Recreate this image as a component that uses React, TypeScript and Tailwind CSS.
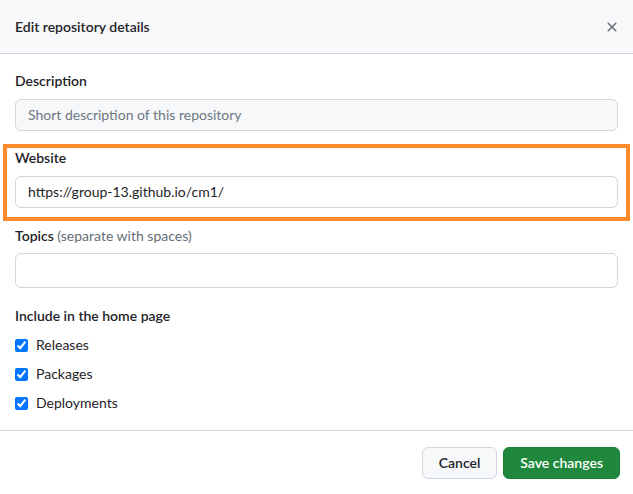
export default function App() {
  const font = { fontFamily: '"Segoe UI", Lato, "Noto Sans", sans-serif' };
  return (
    <div
      className="w-[633px] h-[494px] bg-white text-[#1f2328] text-sm overflow-hidden"
      style={font}
    >
      {/* Header */}
      <div className="h-[54px] bg-[#f6f8fa] border-b border-[#d0d7de] flex items-center justify-between pl-[15px] pr-[13px]">
        <h1 className="text-sm font-semibold">Edit repository details</h1>
        <svg width="16" height="16" viewBox="0 0 16 16" className="fill-[#656d76]">
          <path d="M3.72 3.72a.75.75 0 0 1 1.06 0L8 6.94l3.22-3.22a.749.749 0 0 1 1.275.326.749.749 0 0 1-.215.734L9.06 8l3.22 3.22a.749.749 0 0 1-.326 1.275.749.749 0 0 1-.734-.215L8 9.06l-3.22 3.22a.751.751 0 0 1-1.042-.018.751.751 0 0 1-.018-1.042L6.94 8 3.72 4.78a.75.75 0 0 1 0-1.06Z" />
        </svg>
      </div>

      {/* Body */}
      <div className="px-[15px] pt-[17px] pb-[17px] border-b border-[#d0d7de]">
        <label className="block font-semibold leading-5 mb-2">Description</label>
        <div className="h-8 rounded-md border border-[#d0d7de] bg-[#f6f8fa] flex items-center px-3 text-[#6e7781]">
          Short description of this repository
        </div>

        <div className="-mx-[12px] mt-[13px] border-4 border-[#fd8a2a] px-[8px] pb-[9px]">
          <label className="block font-semibold leading-5 mb-2">Website</label>
          <div className="h-8 rounded-md border border-[#d0d7de] bg-white flex items-center px-3">
            https://group-13.github.io/cm1/
          </div>
        </div>

        <label className="block font-semibold leading-5 mt-[5px] mb-[7px]">
          Topics <span className="font-normal text-[#656d76]">(separate with spaces)</span>
        </label>
        <div className="h-[35px] rounded-md border border-[#d0d7de] bg-white" />

        <div className="font-semibold leading-5 mt-[18px]">Include in the home page</div>
        <div className="flex flex-col gap-[9px] mt-[9px]">
          {["Releases", "Packages", "Deployments"].map((l) => (
            <label key={l} className="flex items-center gap-2 h-5">
              <input type="checkbox" defaultChecked className="w-[13px] h-[13px] m-0" />
              <span>{l}</span>
            </label>
          ))}
        </div>
      </div>

      {/* Footer */}
      <div className="flex justify-end gap-[6px] px-[13px] pt-4">
        <button className="h-8 px-4 rounded-md border border-[#d0d7de] bg-[#f6f8fa] font-semibold">
          Cancel
        </button>
        <button className="h-8 px-4 rounded-md border border-[#1b7f37] bg-[#1f883d] text-white font-semibold">
          Save changes
        </button>
      </div>
    </div>
  );
}
